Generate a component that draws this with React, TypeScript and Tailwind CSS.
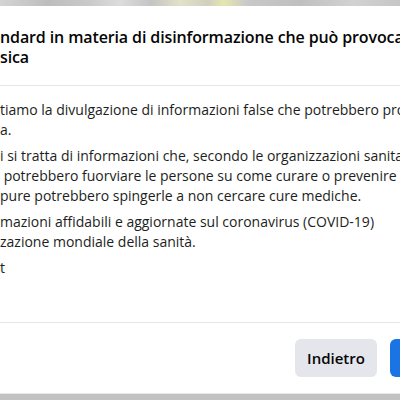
export default function App() {
  const paragraphs = [
    ["tiamo la divulgazione di informazioni false che potrebbero provocare", "a."],
    [
      "i si tratta di informazioni che, secondo le organizzazioni sanitarie",
      " potrebbero fuorviare le persone su come curare o prevenire",
      "pure potrebbero spingerle a non cercare cure mediche.",
    ],
    ["mazioni affidabili e aggiornate sul coronavirus (COVID-19)", "zazione mondiale della sanità."],
    ["t"],
  ];

  return (
    <div className="w-[400px] h-[400px] overflow-hidden flex flex-col bg-[#c4c4c4] font-['Open_Sans',sans-serif]">
      {/* blurred page behind the dialog */}
      <div className="h-[6px] shrink-0 bg-[linear-gradient(90deg,#d4d4d4_0%,#bdbdbd_12%,#c9c9c9_22%,#dcdcdc_30%,#c4c4c4_38%,#e2e2c8_45%,#d0d0c0_52%,#e6e6b0_56%,#c8c8c8_62%,#bfbfbf_75%,#d2d2d2_88%,#c6c6c6_100%)]" />

      <div className="flex-1 bg-white flex flex-col">
        {/* header */}
        <div className="pt-[21px] pb-[18px] border-b border-[#e4e6e9] whitespace-nowrap overflow-hidden">
          <h2 className="text-[16px] leading-[20px] font-semibold tracking-[-0.12px] text-[#050505]">
            <span className="block">ndard in materia di disinformazione che può provocare violenza</span>
            <span className="block">sica</span>
          </h2>
        </div>

        {/* body */}
        <div className="flex-1 pt-[14px] flex flex-col gap-[6px] text-[14px] leading-[20px] text-[#1c1e21] whitespace-nowrap overflow-hidden">
          {paragraphs.map((lines, i) => (
            <p key={i}>
              {lines.map((line) => (
                <span key={line} className="block whitespace-pre">
                  {line}
                </span>
              ))}
            </p>
          ))}
        </div>

        {/* footer */}
        <div className="h-[71px] shrink-0 border-t border-[#e4e6e9] flex items-center justify-end gap-[13px] -mr-[60px]">
          <button className="h-[38px] w-[82px] rounded-[6px] bg-[#e4e6eb] text-[15px] font-semibold text-[#050505]">
            Indietro
          </button>
          <button className="h-[38px] w-[70px] rounded-[6px] bg-[#1b74e4] text-[15px] font-semibold text-white">
            Avanti
          </button>
        </div>
      </div>

      <div className="h-[7px] shrink-0 border-t border-[#e8e8e8] bg-[#c2c2c2]" />
    </div>
  );
}
